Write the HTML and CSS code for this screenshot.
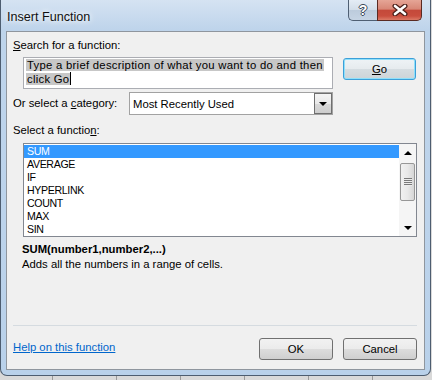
FILE: index.html
```html
<!DOCTYPE html>
<html lang="en">
<head>
    <meta charset="UTF-8">
    <title>Insert Function</title>
    <link rel="stylesheet" href="styles.css">
</head>
<body>
<div class="page">
    <div class="frame">
        <div class="titlebar">
            <span class="caption">Insert Function</span>
            <div class="controls">
                <span class="ctl help">?</span>
                <span class="ctl close">
                    <svg width="18" height="12" viewBox="0 0 18 12">
                        <path d="M4 2 L14 10 M14 2 L4 10" stroke="#4b1f19" stroke-width="5" stroke-linecap="round"/>
                        <path d="M4 2 L14 10 M14 2 L4 10" stroke="#fff" stroke-width="2.6" stroke-linecap="round"/>
                    </svg>
                </span>
            </div>
        </div>
        <div class="client">
            <div class="label lbl-search"><u>S</u>earch for a function:</div>
            <div class="search-row">
                <div class="textbox">
                    <span class="sel">Type a brief description of what you want to do and then</span><br>
                    <span class="sel">click Go</span><span class="caret"></span>
                </div>
                <button class="btn btn-go"><u>G</u>o</button>
            </div>
            <div class="cat-row">
                <span class="label cat-label">Or select a <u>c</u>ategory:</span>
                <div class="select">
                    <span class="select-text">Most Recently Used</span>
                    <span class="drop"><span class="arrow down"></span></span>
                </div>
            </div>
            <div class="label lbl-func">Select a functio<u>n</u>:</div>
            <div class="list">
                <ul class="items">
                    <li class="active">SUM</li>
                    <li>AVERAGE</li>
                    <li>IF</li>
                    <li>HYPERLINK</li>
                    <li>COUNT</li>
                    <li>MAX</li>
                    <li>SIN</li>
                </ul>
                <div class="scrollbar">
                    <span class="sb-btn"><span class="arrow up"></span></span>
                    <span class="thumb"><span class="grip"></span></span>
                    <span class="sb-btn sb-bottom"><span class="arrow down"></span></span>
                </div>
            </div>
            <div class="desc">
                <div class="syntax">SUM(number1,number2,...)</div>
                <div>Adds all the numbers in a range of cells.</div>
            </div>
            <hr class="sep">
            <div class="footer">
                <a href="" class="help-link">Help on this function</a>
                <button class="btn">OK</button>
                <button class="btn">Cancel</button>
            </div>
        </div>
    </div>
</div>
</body>
</html>
```

FILE: styles.css
```css
* {
    padding: 0;
    margin: 0;
    box-sizing: border-box;
}
body {
    font-family: "Liberation Sans", Arial, sans-serif;
    font-size: 11.3px;
    color: #000;
}
li {
    list-style: none;
}
u {
    text-decoration: underline;
    text-underline-offset: 1px;
}
.page {
    width: 432px;
    height: 380px;
    overflow: hidden;
    background-color: #d9d9d9;
    background-image: repeating-linear-gradient(90deg, transparent 0, transparent 52px, #9a9a9a 52px, #9a9a9a 53px, transparent 53px, transparent 64px);
}
.frame {
    width: 431px;
    height: 376px;
    border: 1px solid #4d5d70;
    border-top: none;
    border-radius: 0 0 7px 7px;
    background: linear-gradient(180deg, #d5e3f2 0, #bed4eb 30px, #bcd3eb 60%, #b9d1ea 100%);
}
.titlebar {
    height: 31px;
    display: flex;
    justify-content: space-between;
    align-items: flex-start;
}
.caption {
    margin-top: 9px;
    padding-left: 6px;
    font-size: 12.6px;
    line-height: 16px;
    color: #101010;
    text-shadow: 0 0 5px #fff, 0 0 8px #fff;
}
.controls {
    display: flex;
    margin-right: 8px;
}
.ctl {
    display: flex;
    align-items: center;
    justify-content: center;
    height: 21px;
    border: 1px solid #4f5f73;
    border-top: none;
}
.help {
    width: 29px;
    border-radius: 0 0 0 5px;
    border-right: none;
    background: linear-gradient(180deg, #e4ecf5 0, #d3dee9 48%, #bccbdc 50%, #c6d4e4 100%);
    color: #fff;
    font-weight: bold;
    font-size: 14px;
    text-shadow: 1px 0 0 #3c4856, -1px 0 0 #3c4856, 0 1px 0 #3c4856, 0 -1px 0 #3c4856;
}
.close {
    width: 45px;
    border-radius: 0 0 5px 0;
    border-color: #5a2a22;
    background: linear-gradient(180deg, #e5a596 0, #d88777 45%, #c4493a 52%, #c94e3e 80%, #db7a66 100%);
}
.client {
    margin-left: 5px;
    width: 419px;
    height: 339px;
    border: 1px solid #8f969e;
    background-color: #f0f0f0;
    padding: 0 7px 0 6px;
}
.label {
    line-height: 15px;
}
.lbl-search {
    margin-top: 6px;
}
.search-row {
    display: flex;
    align-items: flex-start;
    margin-top: 4px;
}
.textbox {
    margin-left: 10px;
    width: 310px;
    height: 32px;
    border: 1px solid #abadb3;
    background-color: #fff;
    padding: 0 0 0 2px;
    line-height: 14px;
    letter-spacing: 0.28px;
}
.sel {
    background-color: #c7c7c7;
    color: #000;
    padding: 0 1px;
}
.caret {
    display: inline-block;
    width: 1px;
    height: 13px;
    background-color: #000;
    vertical-align: -2px;
}
.btn {
    width: 74px;
    height: 22px;
    border: 1px solid #707070;
    border-radius: 3px;
    background: linear-gradient(180deg, #f2f2f2 0, #ebebeb 50%, #dddddd 50%, #cfcfcf 100%);
    font-family: inherit;
    font-size: inherit;
    color: #000;
}
.btn-go {
    margin-left: 10px;
    margin-top: 1px;
    width: 73px;
    border-color: #3c9fd8;
    box-shadow: inset 0 0 0 1px #8fe0fb;
    background: linear-gradient(180deg, #eef3f6 0, #e6ebee 50%, #d6dde1 50%, #cdd4d8 100%);
}
.cat-row {
    display: flex;
    align-items: center;
    margin-top: 3px;
    height: 23px;
}
.cat-label {
    width: 116px;
}
.select {
    display: flex;
    align-items: center;
    width: 204px;
    height: 23px;
    border: 1px solid #a2a2a2;
    background-color: #fff;
}
.select-text {
    flex: 1;
    padding-left: 3px;
}
.drop {
    display: flex;
    align-items: center;
    justify-content: center;
    width: 18px;
    height: 21px;
    border: 1px solid #6f6f6f;
    background: linear-gradient(180deg, #f4f4f4 0, #e9e9e9 50%, #d9d9d9 51%, #cdcdcd 100%);
}
.arrow {
    display: block;
    width: 0;
    height: 0;
    border-left: 4px solid transparent;
    border-right: 4px solid transparent;
}
.arrow.down {
    border-top: 4px solid #000;
}
.arrow.up {
    border-bottom: 4px solid #000;
}
.lbl-func {
    margin-top: 8px;
}
.list {
    display: flex;
    margin-top: 5px;
    margin-left: 10px;
    width: 394px;
    height: 94px;
    border: 1px solid #828790;
    background-color: #fff;
}
.items {
    flex: 1;
    padding-top: 1px;
    font-size: 10.6px;
    letter-spacing: -0.35px;
}
.items li {
    height: 13px;
    line-height: 13px;
    padding-left: 3px;
}
.items li.active {
    background-color: #3399ff;
    color: #fff;
}
.scrollbar {
    width: 17px;
    display: flex;
    flex-direction: column;
    align-items: center;
    background-color: #f5f5f5;
}
.sb-btn {
    display: flex;
    align-items: center;
    justify-content: center;
    width: 17px;
    height: 17px;
}
.sb-bottom {
    margin-top: auto;
}
.thumb {
    display: flex;
    align-items: center;
    justify-content: center;
    margin-top: 2px;
    width: 15px;
    height: 38px;
    border: 1px solid #979797;
    border-radius: 2px;
    background: linear-gradient(90deg, #f1f1f1 0, #e9e9e9 50%, #d6d6d6 100%);
}
.grip {
    width: 8px;
    height: 8px;
    background: repeating-linear-gradient(180deg, #7a7a7a 0, #7a7a7a 1px, #ececec 1px, #ececec 2px);
}
.desc {
    margin-top: 5px;
    margin-left: 9px;
    line-height: 15px;
}
.syntax {
    font-weight: bold;
}
.sep {
    margin-top: 53px;
    border: none;
    border-top: 1px solid #d5dbe0;
    width: 404px;
}
.footer {
    display: flex;
    align-items: flex-start;
    margin-top: 12px;
    gap: 10px;
}
.help-link {
    margin-top: 2px;
    margin-right: auto;
    line-height: 15px;
    color: #0066cc;
}
```
